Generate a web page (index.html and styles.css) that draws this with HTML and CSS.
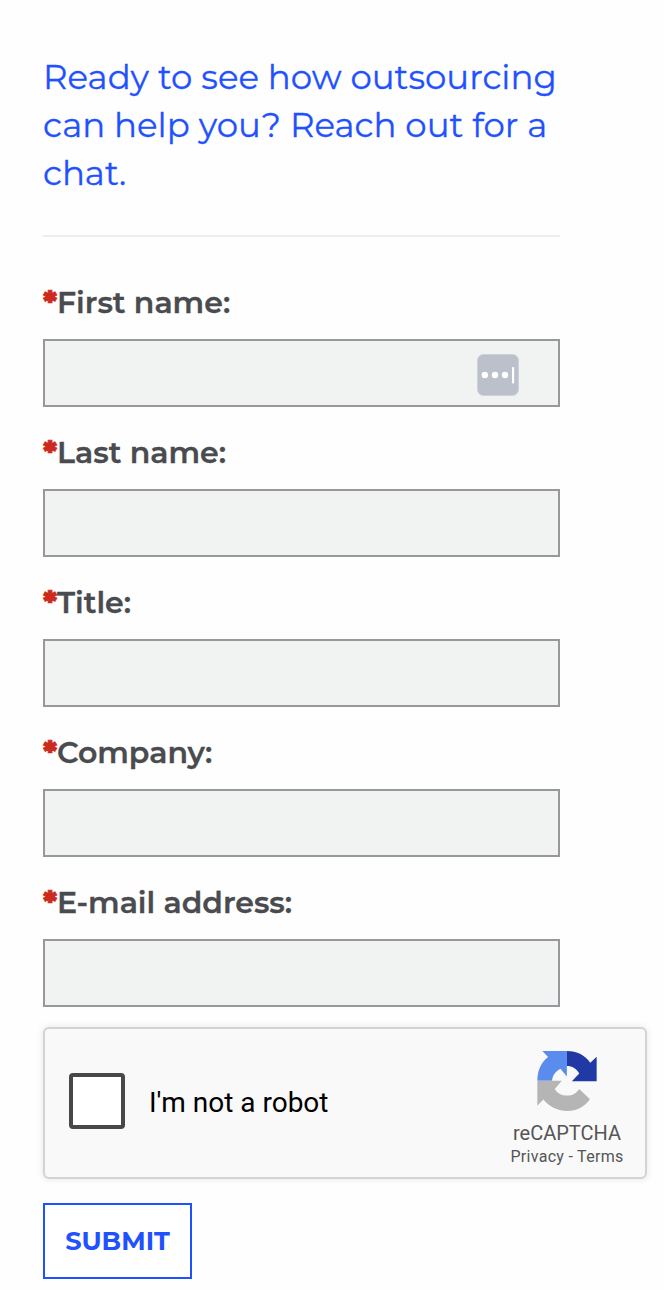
FILE: index.html
```html
<!DOCTYPE html>
<html lang="en">

<head>
  <meta charset="UTF-8">
  <meta name="viewport" content="width=device-width, initial-scale=1.0">
  <title>Contact</title>
  <link rel="stylesheet" href="styles.css">
</head>

<body>
  <form class="contact">
    <h2 class="title">Ready to see how outsourcing can help you? Reach out for a chat.</h2>

    <div class="field">
      <label for="first"><span class="star">*</span>First name:</label>
      <div class="control">
        <input id="first" type="text">
        <svg class="autofill" viewBox="0 0 42 42">
          <rect x=".5" y=".5" width="41" height="41" rx="6" fill="#bbc0ca" stroke="#cdd2da" />
          <g fill="#fff">
            <circle cx="7.8" cy="21" r="3.2" />
            <circle cx="18" cy="21" r="3.2" />
            <circle cx="28" cy="21" r="3.2" />
            <rect x="35" y="13" width="2.2" height="16.5" rx="1" />
          </g>
        </svg>
      </div>
    </div>
    <div class="field">
      <label for="last"><span class="star">*</span>Last name:</label>
      <div class="control"><input id="last" type="text"></div>
    </div>
    <div class="field">
      <label for="title"><span class="star">*</span>Title:</label>
      <div class="control"><input id="title" type="text"></div>
    </div>
    <div class="field">
      <label for="company"><span class="star">*</span>Company:</label>
      <div class="control"><input id="company" type="text"></div>
    </div>
    <div class="field">
      <label for="email"><span class="star">*</span>E-mail address:</label>
      <div class="control"><input id="email" type="text"></div>
    </div>

    <div class="captcha">
      <span class="checkbox"></span>
      <span class="robot">I'm not a robot</span>
      <div class="brand">
        <svg class="logo" viewBox="143 109 177 179">
          <path fill="#5a8cee" d="M158 109H231V185L212 162C197 170 188 182 187 198H143C143 170 153 143 175 127Z" />
          <path fill="#2039a5" d="M231 109C262 109 285 122 301 144L320 126V199H246L268 176C260 162 247 154 231 154Z" />
          <path fill="#b5b5b5" d="M143 198H216L195 222C203 235 216 242 232 242C248 242 260 234 268 222L300 253C283 276 262 288 232 288C205 288 180 277 161 254L143 272Z" />
        </svg>
        <span class="brand-name">reCAPTCHA</span>
        <span class="links">Privacy - Terms</span>
      </div>
    </div>

    <button class="submit" type="button">SUBMIT</button>
  </form>
</body>

</html>
```
FILE: styles.css
```css
* {
  box-sizing: border-box;
}

body {
  margin: 0;
  background: #fefefe;
  font-family: Montserrat, Inter, sans-serif;
}

.contact {
  padding: 53px 17px 0 43px;
}

.title {
  width: 517px;
  height: 184px;
  margin: 0 0 34px;
  border-bottom: 2px solid #ededed;
  color: #1f51ff;
  font-size: 34px;
  font-weight: 400;
  line-height: 48px;
  -webkit-text-stroke: .3px #1f51ff;
}

.field {
  width: 517px;
  margin-bottom: 14px;
}

.field label {
  display: flex;
  height: 68px;
  padding-top: 12px;
  color: #4a4b4f;
  font-size: 30px;
  font-weight: 600;
  line-height: 40px;
  white-space: nowrap;
  -webkit-text-stroke: .3px #4a4b4f;
}

.star {
  width: 14px;
  color: #cc2a1d;
  font-weight: 900;
  -webkit-text-stroke: .6px #cc2a1d;
}

.control {
  position: relative;
}

.control input {
  display: block;
  width: 100%;
  height: 68px;
  border: 2px solid #97979c;
  border-radius: 0;
  background: #f1f3f2;
}

/* password manager badge over the input */
.autofill {
  position: absolute;
  top: 15px;
  right: 41px;
  width: 42px;
  height: 42px;
}

.captcha {
  display: flex;
  align-items: center;
  width: 604px;
  height: 152px;
  margin-top: 20px;
  padding-left: 24px;
  border: 2px solid #d3d3d3;
  border-radius: 6px;
  background: #f9f9f9;
  box-shadow: 0 0 6px 1px rgba(0, 0, 0, .08);
  font-family: Roboto, sans-serif;
}

.checkbox {
  width: 56px;
  height: 56px;
  margin-top: -4px;
  border: 4px solid #484848;
  border-radius: 4px;
  background: #fff;
}

.robot {
  margin-left: 24px;
  padding-bottom: 2px;
  color: #000;
  font-size: 28px;
}

.brand {
  display: flex;
  flex-direction: column;
  align-items: center;
  align-self: flex-start;
  width: 116px;
  margin-left: auto;
  margin-right: 20px;
  padding-top: 22px;
  color: #555;
}

.logo {
  width: 60px;
  height: 60px;
}

.brand-name {
  margin-top: 10px;
  font-size: 20px;
  line-height: 24px;
}

.links {
  font-size: 16px;
  line-height: 24px;
  letter-spacing: .3px;
}

.submit {
  display: flex;
  align-items: center;
  justify-content: center;
  width: 149px;
  height: 76px;
  margin-top: 24px;
  padding: 0 0 2px;
  border: 2px solid #1f51ff;
  background: #fff;
  color: #1f51ff;
  font-family: inherit;
  font-size: 25.6px;
  font-weight: 700;
}
```
